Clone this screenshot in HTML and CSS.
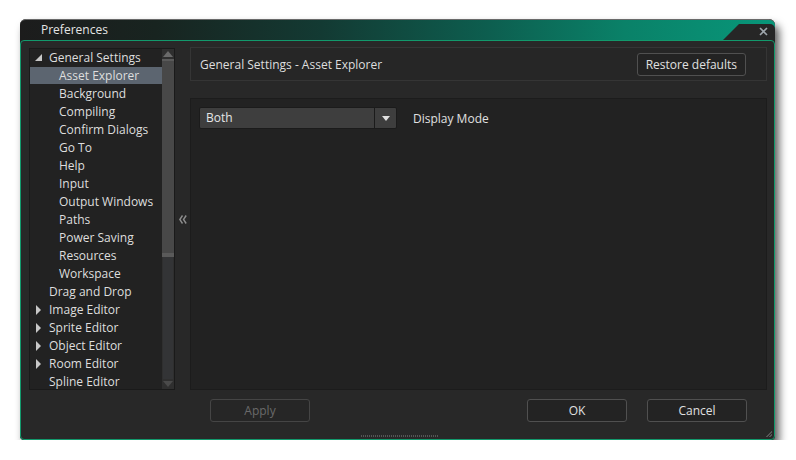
FILE: index.html
```
<!DOCTYPE html>
<html>
<head>
<meta charset="utf-8">
<link rel="stylesheet" href="styles.css">
</head>
<body>
<div class="window">
  <div class="titlebar">
    <span class="title">Preferences</span>
    <div class="closetab"><svg class="x" width="9" height="9" viewBox="0 0 9 9"><path d="M1 1 L8 8 M8 1 L1 8" stroke="#9ea6ac" stroke-width="1.6"/></svg></div>
  </div>
  <div class="frame">
    <div class="main">
      <div class="tree">
        <ul class="rows">
          <li class="row l0"><svg class="tw" width="8" height="8" viewBox="0 0 8 8"><path d="M7 0 L7 7 L0 7 Z" fill="#c8c8c8"/></svg>General Settings</li>
          <li class="row l1 sel">Asset Explorer</li>
          <li class="row l1">Background</li>
          <li class="row l1">Compiling</li>
          <li class="row l1">Confirm Dialogs</li>
          <li class="row l1">Go To</li>
          <li class="row l1">Help</li>
          <li class="row l1">Input</li>
          <li class="row l1">Output Windows</li>
          <li class="row l1">Paths</li>
          <li class="row l1">Power Saving</li>
          <li class="row l1">Resources</li>
          <li class="row l1">Workspace</li>
          <li class="row l0"><span class="tw"></span>Drag and Drop</li>
          <li class="row l0"><svg class="tw" width="8" height="10" viewBox="0 0 8 10"><path d="M1 0 L6 5 L1 10 Z" fill="#c8c8c8"/></svg>Image Editor</li>
          <li class="row l0"><svg class="tw" width="8" height="10" viewBox="0 0 8 10"><path d="M1 0 L6 5 L1 10 Z" fill="#c8c8c8"/></svg>Sprite Editor</li>
          <li class="row l0"><svg class="tw" width="8" height="10" viewBox="0 0 8 10"><path d="M1 0 L6 5 L1 10 Z" fill="#c8c8c8"/></svg>Object Editor</li>
          <li class="row l0"><svg class="tw" width="8" height="10" viewBox="0 0 8 10"><path d="M1 0 L6 5 L1 10 Z" fill="#c8c8c8"/></svg>Room Editor</li>
          <li class="row l0"><span class="tw"></span>Spline Editor</li>
        </ul>
        <div class="scrollbar">
          <div class="sb-arrow"><svg width="10" height="6" viewBox="0 0 10 6"><path d="M5 0 L10 6 L0 6 Z" fill="#6a6a6a"/></svg></div>
          <div class="sb-thumb"></div>
          <div class="sb-track"></div>
          <div class="sb-arrow"><svg width="10" height="6" viewBox="0 0 10 6"><path d="M0 0 L10 0 L5 6 Z" fill="#4a4a4a"/></svg></div>
        </div>
      </div>
      <div class="collapse"><svg width="8" height="9" viewBox="0 0 8 9"><path d="M3.5 0.5 L0.8 4.5 L3.5 8.5 M7.2 0.5 L4.5 4.5 L7.2 8.5" stroke="#8e8e8e" stroke-width="1.4" fill="none"/></svg></div>
      <div class="right">
        <div class="header">
          <span class="htext">General Settings - Asset Explorer</span>
          <button class="btn">Restore defaults</button>
        </div>
        <div class="content">
          <div class="field">
            <div class="dropdown">
              <span class="dd-text">Both</span>
              <span class="dd-btn"><svg width="8" height="5" viewBox="0 0 8 5"><path d="M0 0 L8 0 L4 5 Z" fill="#e0e0e0"/></svg></span>
            </div>
            <span class="label">Display Mode</span>
          </div>
        </div>
      </div>
    </div>
    <div class="footer">
      <button class="btn wide disabled">Apply</button>
      <div class="spacer"></div>
      <button class="btn wide">OK</button>
      <button class="btn wide">Cancel</button>
    </div>
    <div class="grip"></div>
    <div class="corner"></div>
  </div>
</div>
</body>
</html>
```

FILE: styles.css
```
html, body {
  margin: 0;
  padding: 0;
  background: #ffffff;
}
body {
  font-family: "Open Sans", "DejaVu Sans", sans-serif;
  font-size: 12px;
  color: #dedede;
}
.window {
  margin: 19px 0 0 20px;
  width: 755px;
  height: 421px;
  display: flex;
  flex-direction: column;
  border-radius: 6px 6px 4px 4px;
  box-shadow: 4px 6px 9px rgba(0, 0, 0, 0.65);
  background: #232323;
}
.titlebar {
  height: 21px;
  display: flex;
  align-items: stretch;
  border-radius: 6px 6px 0 0;
  border-top: 1px solid #6a6a6a;
  box-sizing: border-box;
  background: linear-gradient(90deg, #1c1c1c 0%, #182420 18%, #133a33 40%, #0d5e4f 62%, #0a8168 80%, #08977a 100%);
}
.title {
  flex: 1;
  padding-left: 21px;
  line-height: 20px;
  font-size: 12px;
  color: #e4e4e4;
}
.closetab {
  align-self: flex-end;
  width: 52px;
  height: 16px;
  background: #262626;
  clip-path: polygon(16px 0, 100% 0, 100% 100%, 0 100%);
  border-radius: 0 5px 0 0;
  display: flex;
  justify-content: flex-end;
  align-items: center;
}
.x {
  margin: 0 7px 2px 0;
}
.frame {
  position: relative;
  flex: 1;
  border: 1px solid #12996c;
  border-radius: 4px;
  background: #282828;
  display: flex;
  flex-direction: column;
}
.main {
  display: flex;
  padding: 6px 7px 0 8px;
  height: 343px;
}
.tree {
  margin-top: 1px;
  width: 146px;
  height: 342px;
  box-sizing: border-box;
  border: 1px solid #1a1a1a;
  background: #222222;
  display: flex;
}
.rows {
  list-style: none;
  margin: 0;
  padding: 0;
  flex: 1;
}
.row {
  height: 18px;
  line-height: 18px;
  white-space: nowrap;
  display: flex;
  align-items: center;
}
.row.l0 { padding-left: 5px; }
.row.l1 { padding-left: 29px; }
.row.sel { background: #5c6570; height: 17px; margin-bottom: 1px; }
.tw {
  display: inline-block;
  width: 8px;
  margin-right: 6px;
  flex: none;
}
.scrollbar {
  width: 12px;
  display: flex;
  flex-direction: column;
  background: #2f2f2f;
}
.sb-arrow {
  height: 10px;
  display: flex;
  align-items: center;
  justify-content: center;
}
.sb-thumb {
  height: 198px;
  background: #484848;
  border-top: 2px solid #5a5a5a;
  border-bottom: 4px solid #5a5a5a;
  box-sizing: border-box;
}
.sb-track {
  flex: 1;
  background: #333436;
  margin: 0 1px;
}
.collapse {
  width: 15px;
  display: flex;
  align-items: center;
  justify-content: center;
  padding: 1px 0 0 1px;
  box-sizing: border-box;
}
.right {
  flex: 1;
  display: flex;
  flex-direction: column;
  gap: 17px;
}
.header {
  height: 34px;
  box-sizing: border-box;
  border: 1px solid #353535;
  background: #262626;
  display: flex;
  align-items: center;
  padding: 0 20px 0 9px;
}
.htext {
  flex: 1;
}
.btn {
  font-family: "Open Sans", "DejaVu Sans", sans-serif;
  font-size: 12px;
  color: #e0e0e0;
  background: #232323;
  border: 1px solid #505050;
  border-radius: 3px;
  height: 23px;
  padding: 0 8px;
}
.btn.wide {
  width: 100px;
}
.btn.disabled {
  color: #6a6a6a;
  border-color: #454545;
  background: #262626;
}
.content {
  height: 292px;
  box-sizing: border-box;
  border: 1px solid #1c1c1c;
  background: #222222;
  padding: 8px 8px;
}
.field {
  display: flex;
  align-items: center;
  gap: 16px;
}
.dropdown {
  width: 198px;
  height: 22px;
  box-sizing: border-box;
  border: 1px solid #1b1b1b;
  border-radius: 2px;
  background: #3e3e3e;
  display: flex;
}
.dd-text {
  flex: 1;
  padding-left: 6px;
  line-height: 20px;
  color: #e6e6e6;
}
.dd-btn {
  width: 21px;
  border-left: 1px solid #1b1b1b;
  display: flex;
  align-items: center;
  justify-content: center;
}
.label {
  color: #e0e0e0;
}
.footer {
  display: flex;
  padding: 9px 27px 0 189px;
  gap: 20px;
}
.spacer {
  flex: 1;
}
.grip {
  position: absolute;
  left: 340px;
  bottom: 2px;
  width: 77px;
  height: 2px;
  background: repeating-linear-gradient(90deg, #555 0 1px, transparent 1px 2px);
}
.corner {
  position: absolute;
  right: 2px;
  bottom: 2px;
  width: 6px;
  height: 6px;
  background: linear-gradient(135deg, transparent 0 50%, #555 50% 60%, transparent 60% 75%, #555 75% 85%, transparent 85%);
}
```
